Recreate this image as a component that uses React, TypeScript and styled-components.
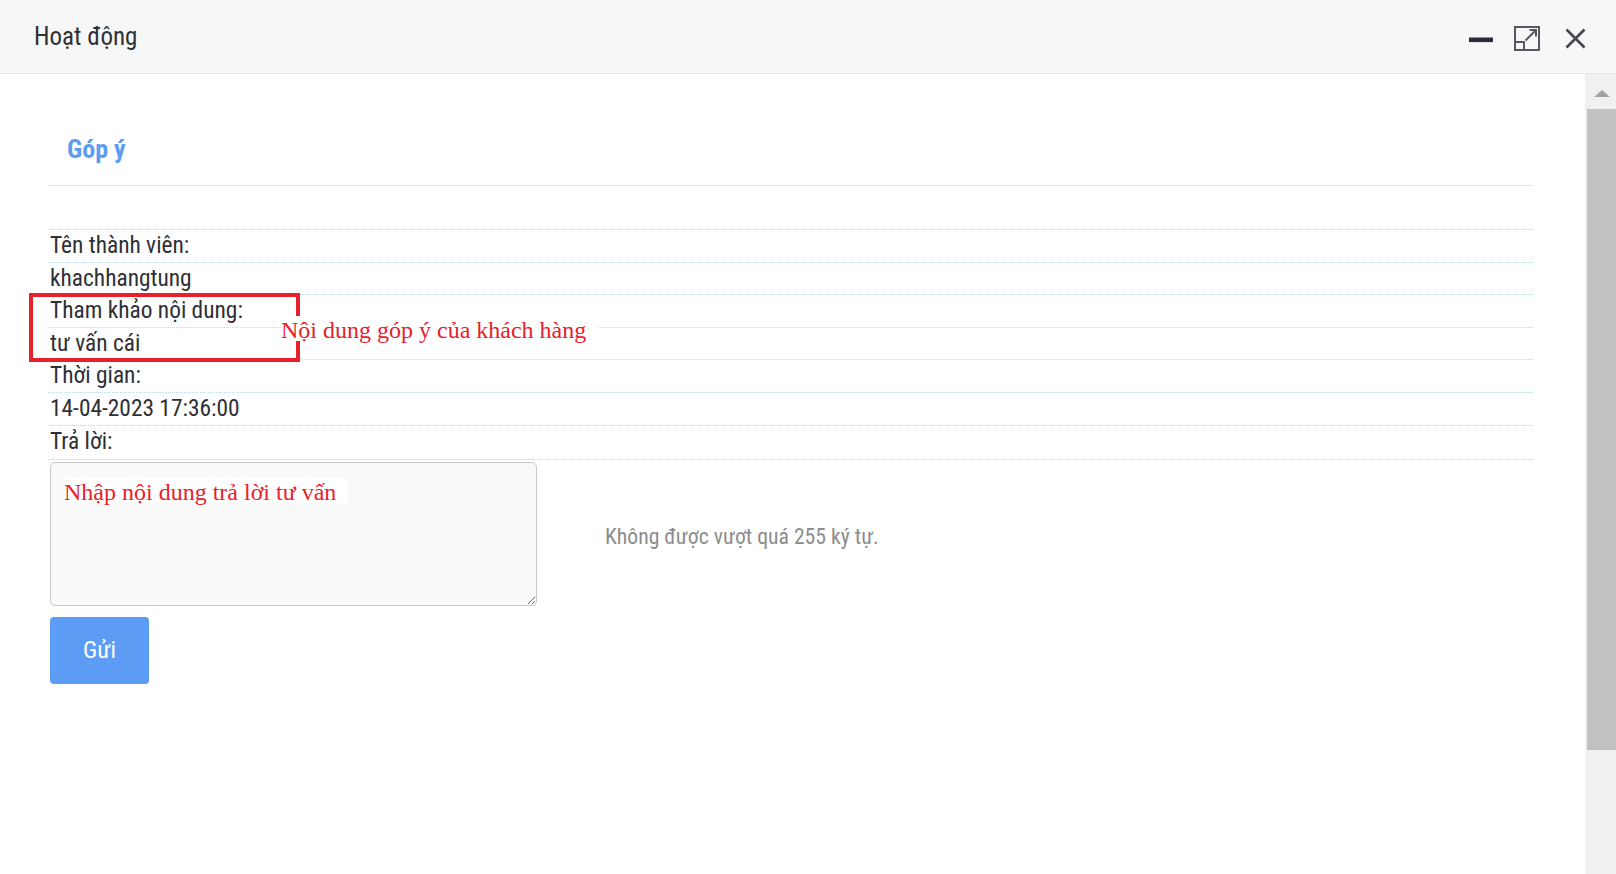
import React from 'react';
import styled, { createGlobalStyle } from 'styled-components';

const GlobalStyle = createGlobalStyle`
  html, body {
    margin: 0;
    padding: 0;
    background: #ffffff;
    height: 100%;
    overflow: hidden;
  }
  #root { height: 100%; }
  * { box-sizing: border-box; }
`;

const Window = styled.div`
  display: flex;
  flex-direction: column;
  height: 874px;
  width: 1616px;
  font-family: 'Roboto Condensed', Roboto, sans-serif;
  color: #2f2f36;
`;

const TitleBar = styled.div`
  display: flex;
  align-items: center;
  justify-content: space-between;
  height: 74px;
  flex-shrink: 0;
  padding: 0 30px 0 34px;
  background: #f7f7f7;
  border-bottom: 1px solid #e7e7e7;
`;

const Title = styled.h1`
  margin: 0;
  font-size: 25px;
  line-height: 30px;
  font-weight: 400;
  color: #2f2f36;
`;

const Controls = styled.div`
  display: flex;
  align-items: center;
  gap: 21px;
  margin-top: 3px;
`;

const IconButton = styled.button<{ $wide?: boolean }>`
  display: flex;
  align-items: center;
  justify-content: center;
  margin-left: ${(p) => (p.$wide ? '4px' : '0')};
  padding: 0;
  border: none;
  background: none;
  cursor: pointer;
`;

const Body = styled.div`
  display: flex;
  flex: 1;
  min-height: 0;
`;

const Content = styled.main`
  flex: 1;
  padding: 0 52px 0 48px;
`;

const SectionHead = styled.div`
  display: flex;
  align-items: flex-end;
  height: 112px;
  padding: 0 0 22px 19px;
  border-bottom: 1px solid #e4e2ec;
`;

const SectionTitle = styled.h2`
  margin: 0;
  font-size: 26px;
  line-height: 28px;
  font-weight: 700;
  color: #5c9cf3;
`;

const InfoList = styled.div`
  position: relative;
  margin-top: 43px;
  border-top: 1px dotted #bcd8e6;
`;

const InfoRow = styled.div<{ $tall?: boolean }>`
  height: ${(p) => (p.$tall ? '34px' : '32.6px')};
  padding-left: 2px;
  font-size: 23.4px;
  line-height: 31.6px;
  border-bottom: 1px dotted #bcd8e6;
  color: #2f2f36;
`;

const Highlight = styled.div`
  position: absolute;
  top: 63px;
  left: -19px;
  width: 271px;
  height: 69px;
  border: 4.5px solid #e8202a;
  pointer-events: none;
`;

const Note = styled.span<{ $top: number; $left: number }>`
  position: absolute;
  top: ${(p) => p.$top}px;
  left: ${(p) => p.$left}px;
  padding: 3px 12px 0 0;
  background: #ffffff;
  color: #e8202a;
  font-family: 'Liberation Serif', 'Times New Roman', serif;
  font-size: 24px;
  line-height: 22px;
  white-space: nowrap;
  pointer-events: none;
`;

const ReplyRow = styled.div`
  display: flex;
  align-items: flex-start;
  gap: 68px;
  margin-top: 2px;
  padding-left: 2px;
`;

const ReplyBox = styled.div`
  position: relative;
  width: 487px;
  height: 144px;
`;

const TextArea = styled.textarea`
  display: block;
  width: 100%;
  height: 100%;
  padding: 10px 14px;
  border: 1px solid #c8c8c8;
  border-radius: 5px;
  background: #f9f9f9;
  font-family: inherit;
  font-size: 20px;
  resize: both;
  outline: none;
`;

const Hint = styled.span`
  margin-top: 62px;
  font-size: 21.7px;
  line-height: 26px;
  color: #8c8c8c;
`;

const SendButton = styled.button`
  display: block;
  width: 99px;
  height: 67px;
  margin: 11px 0 0 2px;
  border: none;
  border-radius: 4px;
  background: #5c9cf5;
  color: #ffffff;
  font-family: inherit;
  font-size: 24px;
  cursor: pointer;
`;

const Scrollbar = styled.div`
  display: flex;
  flex-direction: column;
  align-items: flex-end;
  width: 31px;
  flex-shrink: 0;
  background: #f0f0f0;
`;

const ScrollArrow = styled.div`
  align-self: center;
  margin: 16px 0 0 2px;
  width: 0;
  height: 0;
  border-left: 8px solid transparent;
  border-right: 8px solid transparent;
  border-bottom: 7px solid #a3a3a3;
`;

const ScrollThumb = styled.div`
  width: 29px;
  height: 641px;
  margin-top: 12px;
  background: #c1c1c1;
`;

const MinimizeIcon = () => (
  <svg width="24" height="25" viewBox="0 0 24 25">
    <rect x="0" y="11.5" width="24" height="4.6" fill="#2d2d3a" />
  </svg>
);

const ExpandIcon = () => (
  <svg width="26" height="25" viewBox="0 0 26 25" fill="none" stroke="#55585f" strokeWidth="2">
    <rect x="1" y="1" width="24" height="23" />
    <rect x="1" y="16" width="9" height="8" />
    <path d="M11.5 14.5 L21.5 4.5" />
    <path d="M15.5 4 H22 V10.5" />
  </svg>
);

const CloseIcon = () => (
  <svg width="21" height="21" viewBox="0 0 21 21" fill="none" stroke="#46464f" strokeWidth="2.6">
    <path d="M1.5 1.5 L19.5 19.5 M19.5 1.5 L1.5 19.5" />
  </svg>
);

const rows = [
  'Tên thành viên:',
  'khachhangtung',
  'Tham khảo nội dung:',
  'tư vấn cái',
  'Thời gian:',
  '14-04-2023 17:36:00',
];

export default function App() {
  return (
    <>
      <GlobalStyle />
      <Window>
        <TitleBar>
          <Title>Hoạt động</Title>
          <Controls>
            <IconButton aria-label="minimize">
              <MinimizeIcon />
            </IconButton>
            <IconButton aria-label="maximize">
              <ExpandIcon />
            </IconButton>
            <IconButton aria-label="close" $wide>
              <CloseIcon />
            </IconButton>
          </Controls>
        </TitleBar>
        <Body>
          <Content>
            <SectionHead>
              <SectionTitle>Góp ý</SectionTitle>
            </SectionHead>
            <InfoList>
              {rows.map((r) => (
                <InfoRow key={r}>{r}</InfoRow>
              ))}
              <InfoRow $tall>Trả lời:</InfoRow>
              <Highlight />
              <Note $top={86} $left={233}>
                Nội dung góp ý của khách hàng
              </Note>
            </InfoList>
            <ReplyRow>
              <ReplyBox>
                <TextArea />
                <Note $top={16} $left={14}>
                  Nhập nội dung trả lời tư vấn
                </Note>
              </ReplyBox>
              <Hint>Không được vượt quá 255 ký tự.</Hint>
            </ReplyRow>
            <SendButton>Gửi</SendButton>
          </Content>
          <Scrollbar>
            <ScrollArrow />
            <ScrollThumb />
          </Scrollbar>
        </Body>
      </Window>
    </>
  );
}
